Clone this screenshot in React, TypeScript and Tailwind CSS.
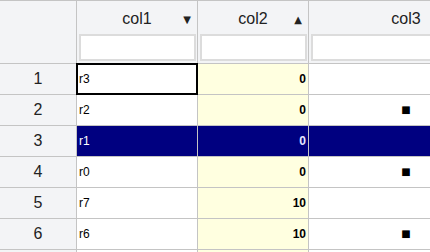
import React from "react";

const rows = [
  { n: 1, c1: "r3", c2: "0", c3: false },
  { n: 2, c1: "r2", c2: "0", c3: true },
  { n: 3, c1: "r1", c2: "0", c3: false },
  { n: 4, c1: "r0", c2: "0", c3: true },
  { n: 5, c1: "r7", c2: "10", c3: false },
  { n: 6, c1: "r6", c2: "10", c3: true },
];

export default function App() {
  return (
    <div
      className="w-[430px] h-[252px] overflow-hidden bg-white text-black"
      style={{ fontFamily: '"Liberation Sans", Arial, sans-serif' }}
    >
      <div className="w-[600px]">
        {/* header */}
        <div className="flex h-[64px] border-t border-b border-[#c4c4c4] bg-[#f3f4f6]">
          <div className="w-[77px] shrink-0 border-r border-[#c4c4c4]" />
          {[
            { t: "col1", a: "▼", w: "w-[121px]" },
            { t: "col2", a: "▲", w: "w-[111px]" },
            { t: "col3", a: "", w: "w-[195px]" },
          ].map((h) => (
            <div
              key={h.t}
              className={`${h.w} shrink-0 border-r border-[#c4c4c4] flex flex-col`}
            >
              <div className="relative h-[33px] flex items-center justify-center text-[16px] text-[#222]">
                <span className="mt-[3px]">{h.t}</span>
                {h.a && (
                  <span
                    className="absolute right-[6px] top-[14px] text-[10px] leading-none"
                    style={{ fontFamily: '"DejaVu Sans", sans-serif' }}
                  >
                    {h.a}
                  </span>
                )}
              </div>
              <div className="pl-[2px] pr-[1px]">
                <div className="h-[27px] border-2 border-[#dcdcdc] bg-white" />
              </div>
            </div>
          ))}
        </div>
        {rows.map((r) => {
          const sel = r.n === 3;
          return (
            <div key={r.n} className="flex h-[31px]">
              <div className="w-[77px] shrink-0 border-r border-b border-[#c4c4c4] bg-[#f3f4f6] flex items-center justify-center text-[16px] text-[#222]">
                {r.n}
              </div>
              <div
                className={`relative w-[121px] shrink-0 border-r border-b border-[#c4c4c4] flex items-center pl-[2px] text-[12px] ${
                  sel ? "bg-[#000080] text-white" : ""
                }`}
              >
                {r.c1}
                {r.n === 1 && (
                  <div className="absolute left-[-1px] top-[-1px] right-[-1px] bottom-[-1px] border-2 border-black" />
                )}
              </div>
              <div
                className={`w-[111px] shrink-0 border-r border-b border-[#c4c4c4] flex items-center justify-end pr-[2px] text-[12px] font-bold ${
                  sel ? "bg-[#000080] text-[#e6e6ff]" : "bg-[#ffffe0]"
                }`}
              >
                {r.c2}
              </div>
              <div
                className={`w-[195px] shrink-0 border-r border-b border-[#c4c4c4] flex items-center justify-center ${
                  sel ? "bg-[#000080]" : ""
                }`}
              >
                {r.c3 && (
                  <span
                    className="text-[10px] leading-none"
                    style={{ fontFamily: '"DejaVu Sans", sans-serif' }}
                  >
                    ■
                  </span>
                )}
              </div>
            </div>
          );
        })}
        <div className="flex h-[31px]">
          <div className="w-[77px] shrink-0 border-r border-[#c4c4c4] bg-[#f3f4f6]" />
          <div className="w-[121px] shrink-0 border-r border-[#c4c4c4]" />
          <div className="w-[111px] shrink-0 border-r border-[#c4c4c4] bg-[#ffffe0]" />
          <div className="w-[195px] shrink-0" />
        </div>
      </div>
    </div>
  );
}
